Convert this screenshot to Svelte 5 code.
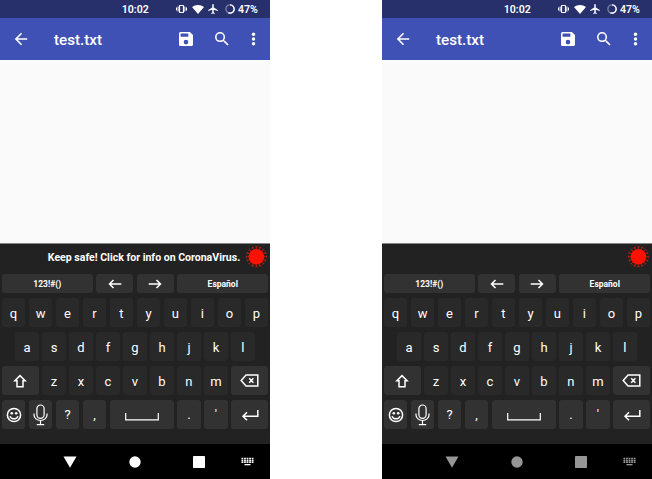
<script>
  const phones = [
    { message: 'Keep safe! Click for info on CoronaVirus.', dim: false },
    { message: '', dim: true }
  ];
  const top = 'qwertyuiop'.split('');
  const middle = 'asdfghjkl'.split('');
  const bottom = 'zxcvbnm'.split('');
  const spikes = Array.from({ length: 16 }, (_, i) => i * 22.5);
</script>

<main>
  {#each phones as phone}
    <section class="phone">
      <header class="status">
        <span class="time">10:02</span>
        <svg class="vibrate" width="11" height="10" viewBox="0 0 11 10"><path d="M0 3.500h1v3H0zM1.600 2.500h1v5h-1zM8.400 2.500h1v5h-1zM10 3.500h1v3h-1z" /><rect x="3.500" y="1.500" width="4" height="7" rx=".5" fill="none" stroke="currentColor" stroke-width="1.200" /></svg>
        <svg class="wifi" width="12" height="9" viewBox="0 0 12 9"><path d="M6 9 0 2.100C3.400-.6 8.600-.6 12 2.100z" /></svg>
        <svg class="plane" width="12" height="12" viewBox="0 0 24 24"><path d="M21.500 16v-2l-8-5V3.500a1.500 1.500 0 0 0-3 0V9l-8 5v2l8-2.500V19l-2 1.500V22l3.500-1 3.500 1v-1.500L13.500 19v-5.500z" /></svg>
        <svg class="ring" width="10" height="10" viewBox="0 0 10 10"><circle cx="5" cy="5" r="4.100" fill="none" stroke="#777da2" stroke-width="1.400" /><path d="M5 .9a4.100 4.100 0 1 1-1.600 7.850" fill="none" stroke="#fff" stroke-width="1.400" /></svg>
        <span>47%</span>
      </header>
      <div class="appbar">
        <svg class="back" width="20" height="20" viewBox="-.85 -.85 25.700 25.700"><path d="M20 11H7.830l5.590-5.590L12 4l-8 8 8 8 1.410-1.410L7.830 13H20z" /></svg>
        <h1>test.txt</h1>
        <svg width="20" height="20" viewBox="-.85 -.85 25.700 25.700"><path d="M17 3H5a2 2 0 0 0-2 2v14a2 2 0 0 0 2 2h14c1.100 0 2-.9 2-2V7zm-5 16a3 3 0 1 1 0-6 3 3 0 0 1 0 6zm3-10H5V5h10z" /></svg>
        <svg class="search" width="20" height="20" viewBox="-.85 -.85 25.700 25.700"><path d="M15.500 14h-.79l-.28-.27A6.470 6.470 0 0 0 16 9.500 6.500 6.500 0 1 0 9.500 16c1.610 0 3.090-.59 4.230-1.570l.27.28v.79l5 4.990L20.490 19zm-6 0a4.500 4.500 0 1 1 0-9 4.500 4.500 0 0 1 0 9z" /></svg>
        <svg class="more" width="19" height="20" viewBox="-.2 -.85 24.400 25.700"><circle cx="12" cy="6" r="2.200" /><circle cx="12" cy="12" r="2.200" /><circle cx="12" cy="18" r="2.200" /></svg>
      </div>
      <div class="document"></div>
      <div class="keyboard">
        <div class="suggestion">
          <span>{phone.message}</span>
          <svg class="virus" width="22" height="22" viewBox="-11.400 -10.700 22 22">
            <circle r="7.800" />
            {#each spikes as angle}
              <path d="M0-7.500V-10M-1.100-10H1.100" transform="rotate({angle})" />
            {/each}
          </svg>
        </div>
        <div class="row tools">
          <div class="key special wide">123!#()</div>
          <div class="key special medium"><svg width="14" height="10" viewBox="0 0 14 10"><path class="line" d="M13.300 5H1.500M5.500 1l-4 4 4 4" /></svg></div>
          <div class="key special medium"><svg width="14" height="10" viewBox="0 0 14 10"><path class="line" d="M.7 5h11.800M8.500 1l4 4-4 4" /></svg></div>
          <div class="key special wide">Español</div>
        </div>
        <div class="row">{#each top as letter}<div class="key">{letter}</div>{/each}</div>
        <div class="row">{#each middle as letter}<div class="key">{letter}</div>{/each}</div>
        <div class="row">
          <div class="key special medium"><svg width="14" height="14" viewBox="0 0 14 14"><path class="line" d="M7 1.600 1.900 6.700H4v6h6v-6h2.100z" /></svg></div>
          {#each bottom as letter}<div class="key">{letter}</div>{/each}
          <div class="key special medium"><svg width="19" height="13" viewBox="0 0 19 13"><path class="line" d="M6 1h11.800v11H6L1.200 6.500zM9.200 4.300l4.200 4.400M13.400 4.300 9.200 8.700" /></svg></div>
        </div>
        <div class="row">
          <div class="key special"><svg width="16" height="16" viewBox="0 0 16 16"><circle class="line" cx="8" cy="8" r="6.600" /><circle cx="5.800" cy="6.200" r="1.300" /><circle cx="10.200" cy="6.200" r="1.300" /><path class="line" d="M4 9.200c1.500 3.500 6.500 3.500 8 0" /></svg></div>
          <div class="key special"><svg width="15" height="22" viewBox="0 0 15 22"><rect class="thin" x="3.900" y="1" width="7.200" height="13.300" rx="3.600" /><path class="thin" d="M1 9.500v1.500a6.500 5.500 0 0 0 13 0V9.500M7.500 16.500v4M3.800 20.600h7.400" /></svg></div>
          <div class="key special">?</div>
          <div class="key special">,</div>
          <div class="key special space"><svg width="34" height="8" viewBox="0 0 34 8"><path class="thin" d="M.7 0v6.800h32.600V0" /></svg></div>
          <div class="key special">.</div>
          <div class="key special">'</div>
          <div class="key special medium"><svg width="18" height="12" viewBox="0 0 18 12"><path class="line" d="M16.800 1v6.300H2M6 3.300l-4 4 4 4" /></svg></div>
        </div>
      </div>
      <nav class:dim={phone.dim}>
        <svg width="14" height="12" viewBox="0 0 14 12"><path d="M.5.500h13L7 11.800z" /></svg>
        <svg width="12" height="12" viewBox="0 0 12 12"><circle cx="6" cy="6" r="5.700" /></svg>
        <svg width="12" height="12" viewBox="0 0 12 12"><rect width="12" height="12" rx=".7" /></svg>
        <svg class="keys" width="13" height="9" viewBox="0 0 13 9"><path d="M.5 1.500h12M.5 3.500h12M.5 5.300h12" fill="none" stroke="currentColor" stroke-width="1.500" stroke-dasharray="1.800 .75" /><path d="M3.500 7h6v1.300h-6z" /></svg>
      </nav>
    </section>
  {/each}
</main>

<style>
  :global(body) { background: #fff; }
  main { display: flex; justify-content: space-between; width: 652px; height: 479px; overflow: hidden; font-family: Roboto, sans-serif; color: #fff; }
  .phone { display: flex; flex-direction: column; width: 270px; height: 479px; }
  svg { display: block; flex: none; fill: currentColor; }
  .status { display: flex; align-items: center; box-sizing: border-box; height: 18px; padding-left: 121.700px; background: #27306b; font-size: 10.600px; font-weight: 600; white-space: nowrap; }
  .time { width: 54.300px; }
  .wifi { margin-left: 5px; }
  .plane { margin-left: 3px; }
  .ring { margin: 0 3px 0 6px; }
  .appbar { display: flex; align-items: center; height: 42px; padding-left: 11px; background: #3f51b5; }
  h1 { width: 122px; margin: 1px 0 0 23px; font-size: 15.200px; line-height: 20px; font-weight: 500; }
  .search { margin-left: 16px; }
  .more { margin-left: 12px; }
  .document { flex: 1; background: #fafafa; }
  .keyboard { box-sizing: border-box; height: 201px; border-top: 1px solid #858585; background: #222; }
  .suggestion { display: flex; align-items: center; justify-content: flex-end; height: 26px; margin-bottom: 4px; padding-right: 3px; font-size: 10.550px; font-weight: 700; white-space: nowrap; }
  .suggestion span { margin-right: 4.800px; }
  .virus { color: #f10; }
  .virus path { fill: none; stroke: #d51b10; stroke-width: .8; }
  .row { display: flex; gap: 3.700px; height: 29px; margin-bottom: 5px; padding-left: 1.900px; }
  .row:nth-child(4) { padding-left: 15.400px; }
  .tools { height: 19px; font-weight: 700; }
  .key { display: flex; align-items: center; justify-content: center; flex: none; box-sizing: border-box; width: 23.300px; border-radius: 3px; background: #292929; font-size: 13px; padding-top: 1px; }
  .special { background: #323232; padding-top: 0; }
  .tools .key { font-size: 8.500px; }
  .medium { width: 36.800px; }
  .wide { width: 90.800px; }
  .space { width: 63.800px; padding-top: 4px; }
  .line, .thin { fill: none; stroke: currentColor; stroke-width: 1.500; }
  .thin { stroke-width: 1.200; }
  nav { display: flex; align-items: center; height: 35px; padding-left: 63px; background: #000; }
  nav svg + svg { margin-left: 52px; }
  nav svg + svg + svg { margin-left: 52.400px; }
  nav .keys.keys { margin: 0 0 0 36px; }
  .dim { color: #969696; }
</style>
